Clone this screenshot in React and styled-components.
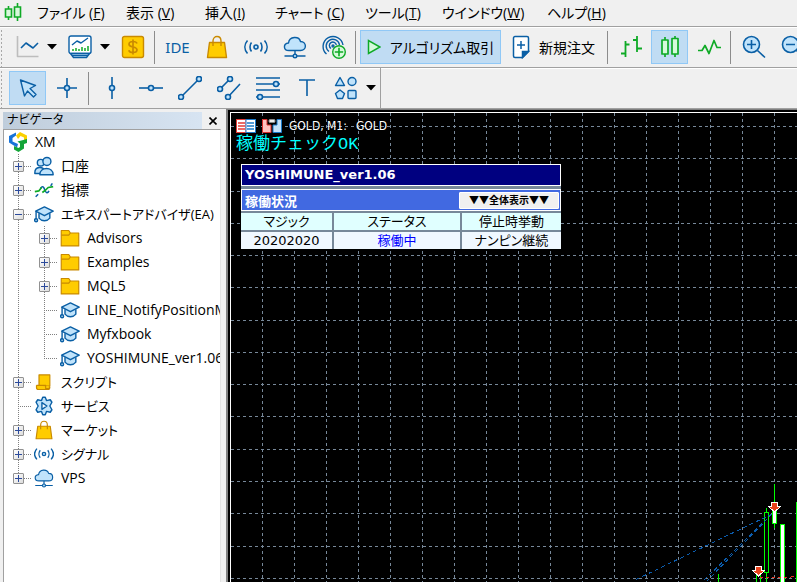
import React from 'react'
import styled, { createGlobalStyle, css } from 'styled-components'

const BLUE = '#0a5fa5'
const SKY = '#c0e3fb'
const GREEN = '#0faa26'
const MINT = '#d6fadb'
const GOLD = '#ffcc00'
const OCHRE = '#c98a00'

const GlobalStyle = createGlobalStyle`
  * { box-sizing: border-box; }
  body {
    margin: 0;
    overflow: hidden;
    background: #f0f0f0;
    color: #000;
    font-family: "Open Sans", "Noto Sans CJK JP", sans-serif;
    font-size: 14px;
  }
  button {
    font: inherit;
    color: inherit;
  }
`

const Window = styled.div`
  display: flex;
  flex-direction: column;
  height: 100vh;
`

const MenuBar = styled.nav`
  display: flex;
  flex: none;
  align-items: center;
  height: 27px;
  padding-left: 4px;
  border-bottom: 1px solid #a0a0a0;
  white-space: nowrap;
`

const MenuButton = styled.button`
  flex: none;
  width: ${(p) => p.$width}px;
  padding: 0;
  border: 0;
  background: none;
  line-height: 20px;
  text-align: left;
  white-space: nowrap;
  font-feature-settings: "palt";
`

const AppIcon = styled.span`
  display: flex;
  flex: none;
  width: 33px;
`

const ToolBar = styled.div`
  display: flex;
  flex: none;
  align-items: center;
  gap: 2px;
  height: 41px;
  padding-left: ${(p) => p.$indent}px;
  border-bottom: 1px solid #a0a0a0;
  background: radial-gradient(circle, #a8a8a8 1px, transparent 1px) 0 2px / 3px 4px repeat-y;
  box-shadow: inset 0 1px #fff;
  overflow: hidden;
`

const ToolButton = styled.button`
  display: flex;
  flex: none;
  align-items: center;
  justify-content: center;
  gap: 9px;
  height: 34px;
  width: ${(p) => p.$width || 37}px;
  padding: 0;
  border: 1px solid transparent;
  background: none;
  white-space: nowrap;
  font-feature-settings: "palt";
  ${(p) =>
    p.$active &&
    css`
      border-color: #90c8f6;
      background: #c0dcf3;
    `}
`

const DropDown = styled.div`
  display: flex;
  flex: none;
`

const CaretButton = styled.button`
  display: flex;
  align-items: center;
  justify-content: center;
  width: 14px;
  height: 34px;
  padding: 0;
  border: 0;
  background: none;
`

const Separator = styled.span`
  flex: none;
  width: 1px;
  height: 33px;
  margin: 0 2px 0 1px;
  background: #8c8c8c;
`

const BarEnd = styled.span`
  align-self: stretch;
  width: 1px;
  background: #a0a0a0;
`

const IdeText = styled.span`
  color: ${BLUE};
  font-family: "Noto Sans", sans-serif;
  font-size: 15px;
`

const Body = styled.div`
  display: flex;
  flex: 1;
  min-height: 0;
`

const Navigator = styled.aside`
  display: flex;
  flex: none;
  flex-direction: column;
  width: 226px;
  padding: 3px 5px 0 3px;
`

const NavHead = styled.header`
  display: flex;
  flex: none;
  align-items: stretch;
  height: 17px;
`

const NavTitle = styled.h2`
  flex: 1;
  margin: 0;
  padding-left: 4px;
  background: linear-gradient(to right, #bfcddb, #d7e4f2);
  font-size: 12px;
  font-weight: 400;
  line-height: 16px;
  font-feature-settings: "palt";
`

const CloseButton = styled.button`
  display: flex;
  align-items: center;
  justify-content: flex-end;
  width: 19px;
  padding: 0 4px 0 0;
  border: 0;
  background: none;
`

const Tree = styled.ul`
  flex: 1;
  margin: 0;
  padding: 0;
  overflow: hidden;
  border: 1px solid #a0a0a0;
  border-right-color: #e3e3e3;
  border-bottom: 0;
  background: #fff;
  list-style: none;
`

const TreeRow = styled.li`
  display: flex;
  align-items: center;
  height: 24px;
  white-space: nowrap;
`

const TreeIcon = styled.span`
  display: flex;
  flex: none;
  width: 20px;
  margin-right: 7px;
  margin-left: ${(p) => (p.$root ? 4 : 0)}px;
`

const TreeLabel = styled.span`
  font-size: ${(p) => (p.$kana ? 13 : 14)}px;
  line-height: 24px;
  font-feature-settings: "palt";
`

const vLine = 'repeating-linear-gradient(to bottom, #808080 0 1px, transparent 1px 2px)'
const hLine = 'repeating-linear-gradient(to right, #808080 0 1px, transparent 1px 2px)'

const Trunk = styled.span`
  flex: none;
  align-self: stretch;
  width: 26px;
  background: ${vLine} 14px 0 / 1px 100% no-repeat;
`

const Guide = styled.span`
  display: flex;
  flex: none;
  align-items: center;
  align-self: stretch;
  width: 30px;
  padding-left: 9px;
  background:
    ${vLine} 14px 0 / 1px ${(p) => (p.$last ? '50%' : '100%')} no-repeat,
    ${hLine} 14px 12px / 14px 1px no-repeat;
`

const Expander = styled.button`
  display: flex;
  align-items: center;
  justify-content: center;
  width: 11px;
  height: 11px;
  padding: 0;
  border: 1px solid #919191;
  border-radius: 1px;
  background: linear-gradient(135deg, #fff, #dcdcdc);
`

const Chart = styled.main`
  position: relative;
  flex: 1;
  min-width: 0;
  padding: 5px 0 0 5px;
  overflow: hidden;
  border-top: 1px solid #fff;
  border-left: 1px solid #fff;
  background: #000;
`

const ChartFrame = styled.div`
  display: flex;
  flex: 1;
  min-width: 0;
  padding: 2px 0 0 2px;
  border-top: 1px solid #808080;
  border-left: 2px solid #808080;
  background: #000;
`

const ChartCanvas = styled.svg`
  position: absolute;
  top: 0;
  left: 0;
  width: 100%;
  height: 100%;
`

const ChartContent = styled.div`
  position: relative;
`

const ChartHead = styled.div`
  display: flex;
  align-items: center;
  gap: 6px;
  height: 16px;
  color: #fff;
  font-family: "DejaVu Sans Condensed", "DejaVu Sans", sans-serif;
  font-size: 12px;
`

const SymbolName = styled.span`
  margin-left: ${(p) => (p.$first ? 1 : 3)}px;
`

const CheckText = styled.div`
  color: #00ffff;
  font-family: "Liberation Mono", "Noto Sans CJK JP", monospace;
  font-size: 17px;
  line-height: 22px;
`

const Panel = styled.section`
  width: 320px;
  margin: 8px 0 0 5px;
  background: #778899;
  font-family: "DejaVu Sans", "Noto Sans CJK JP", sans-serif;
  font-size: 13px;
`

const PanelTitle = styled.h1`
  margin: 0 0 3px;
  padding-left: 3px;
  border: 1px solid #fff;
  background: #000080;
  color: #fff;
  font-size: 13px;
  font-weight: 700;
  line-height: 20px;
`

const PanelBar = styled.div`
  display: flex;
  align-items: center;
  justify-content: space-between;
  height: 22px;
  padding: 0 1px 0 3px;
  border: 1px solid #fff;
  background: #4169e1;
  color: #fff;
  font-weight: 700;
`

const ShowAll = styled.button`
  width: 100px;
  height: 17px;
  padding: 0;
  border: 1px solid #fff;
  border-radius: 1px;
  background: #f0f0f0;
  color: #000;
  font-family: "Noto Sans CJK JP", sans-serif;
  font-size: 10px;
  line-height: 14px;
  white-space: nowrap;
`

const StatusTable = styled.table`
  width: 100%;
  border-collapse: separate;
  border-spacing: 0;
  table-layout: fixed;
`

const cell = css`
  height: 19px;
  padding: 0;
  border-top: 2px solid #778899;
  border-left: 2px solid #778899;
  font-weight: 400;
  line-height: 17px;
  text-align: center;
  font-feature-settings: "palt";
  &:first-child { border-left: 0; }
`

const HeadCell = styled.th`
  ${cell}
  width: ${(p) => p.$width}px;
  background: #e0ffff;
`

const DataCell = styled.td`
  ${cell}
  background: #f0f8ff;
  color: ${(p) => (p.$running ? '#0000ff' : '#000')};
`

const Icon = ({ size = 24, children, ...rest }) => (
  <svg
    width={size}
    height={size}
    viewBox="0 0 24 24"
    fill="none"
    stroke={BLUE}
    strokeWidth="1.4"
    strokeLinejoin="round"
    aria-hidden="true"
    {...rest}
  >
    {children}
  </svg>
)

const Caret = () => (
  <svg width="10" height="6" viewBox="0 0 10 6" aria-hidden="true">
    <path d="M0 0h10L5 5.5z" fill="#000" />
  </svg>
)

const LogoIcon = () => (
  <svg width="18" height="20" viewBox="0 0 18 20" fill="#d8f8dc" stroke={GREEN} strokeWidth="1.6" aria-hidden="true">
    <path d="M4.500 3v14M13.500 0v18" />
    <path d="M1.500 6h6v8h-6zM10.500 4h6v10h-6z" />
  </svg>
)

const LineChartIcon = () => (
  <Icon>
    <path d="M2.500 1v20.500h21" stroke="#bdbdbd" strokeWidth="1.600" />
    <path d="M6 13l5-5 7 5 5-5" strokeWidth="1.600" />
  </Icon>
)

const MonitorIcon = () => (
  <Icon>
    <rect x="1" y="1" width="22" height="17.500" rx="2" fill="#fff" />
    <path d="M4 10l5-4 4 2 7-5" />
    <path d="M5 16v-2M8 16v-3M11 16v-2M14 16v-4M17 16v-3M20 16v-5" stroke={GREEN} strokeWidth="1.500" />
    <path d="M2.500 18.500h19l-3 4h-13z" fill={SKY} />
    <path d="M4 20.500h16" />
  </Icon>
)

const DollarIcon = () => (
  <Icon stroke={OCHRE}>
    <rect x="1.500" y="1.500" width="21" height="21" rx="2" fill={GOLD} />
    <path d="M16 8.500c-.5-1.500-2-2-4-2s-4 .8-4 2.700c0 3.800 8 1.800 8 5.600 0 1.900-2 2.700-4 2.700s-3.800-.7-4.200-2.300M12 4.500v15" strokeWidth="1.700" />
  </Icon>
)

const BagIcon = ({ size }) => (
  <Icon size={size} stroke={OCHRE}>
    <path d="M4.500 7.500h15l2 15h-19z" fill={GOLD} />
    <path d="M8 11V6c0-6 8-6 8 0v5" />
  </Icon>
)

const SignalIcon = ({ size }) => (
  <Icon size={size} strokeWidth="1.600">
    <circle cx="12" cy="12" r="2" fill={SKY} />
    <path d="M7.500 7.500c-2 2.500-2 6.500 0 9M16.500 7.500c2 2.500 2 6.500 0 9M3.500 5.500c-3.500 4-3.500 9 0 13M20.500 5.500c3.500 4 3.500 9 0 13" />
  </Icon>
)

const CloudIcon = ({ size }) => (
  <Icon size={size}>
    <path d="M6 15.500c-6 0-6-7-.5-7.500C6.500 1 16 1 17.500 6.500c6.500 0 6.500 9 0 9z" fill={SKY} />
    <path d="M12 15.500v4M1.500 21h21" />
    <circle cx="12" cy="21" r="1.800" fill={SKY} />
  </Icon>
)

const RadarIcon = () => (
  <Icon>
    <path d="M4.500 19A10 10 0 1 1 21 10M7 16.500A6.700 6.700 0 1 1 17.500 10M9 13.500A3.500 3.500 0 1 1 14.300 10" />
    <circle cx="11" cy="11" r="1" />
    <circle cx="17" cy="17" r="6.300" fill={MINT} stroke={GREEN} />
    <path d="M17 12.800v8.400M12.800 17h8.400" stroke={GREEN} strokeWidth="1.600" />
  </Icon>
)

const PlayIcon = () => (
  <svg width="14" height="16" viewBox="0 0 14 16" fill={MINT} stroke={GREEN} strokeWidth="1.500" aria-hidden="true">
    <path d="M1.500 1.500v13L13 8z" />
  </svg>
)

const NewOrderIcon = () => (
  <svg width="18" height="24" viewBox="0 0 18 24" fill="none" stroke={BLUE} strokeWidth="1.500" aria-hidden="true">
    <path d="M3 1.500h12a1.500 1.500 0 0 1 1.500 1.500v13.500l-6 6H3A1.500 1.500 0 0 1 1.500 21V3A1.500 1.500 0 0 1 3 1.500z" fill="#fff" />
    <path d="M10.500 22.500v-6h6z" fill={BLUE} />
    <path d="M9 6v8M5 10h8" />
  </svg>
)

const BarsIcon = () => (
  <Icon stroke={GREEN} strokeWidth="1.800">
    <path d="M6.500 6v16M2 18.500h4.500M6.500 9.500h4M18 1v16M14 5h4M18 13.500h5" />
  </Icon>
)

const CandlesIcon = () => (
  <Icon stroke={GREEN} strokeWidth="1.700">
    <path d="M7 2v20M17 1v21" />
    <path d="M4 5h6v14H4zM14 3.500h6V19h-6z" fill={MINT} />
  </Icon>
)

const ZigzagIcon = () => (
  <Icon stroke={GREEN} strokeWidth="1.700">
    <path d="M1 15.500h4l3-5 4 8 5-13 3 7h4" />
  </Icon>
)

const ZoomIcon = ({ plus }) => (
  <Icon strokeWidth="1.600">
    <circle cx="9.500" cy="9.500" r="8" fill={SKY} />
    <path d="M15.500 15.500l7.500 7M5 9.500h9" />
    {plus && <path d="M9.500 5v9" />}
  </Icon>
)

const CursorIcon = () => (
  <Icon>
    <path d="M4.500 4l15 5.500-5.500 3 6 6-2.500 2.500-6-6-3 5z" fill={SKY} />
  </Icon>
)

const NodeIcon = ({ d, dots }) => (
  <Icon strokeWidth="1.600">
    <path d={d} />
    {dots.map(([cx, cy]) => (
      <circle key={`${cx}-${cy}`} cx={cx} cy={cy} r="2.500" fill={SKY} />
    ))}
  </Icon>
)

const TextIcon = () => (
  <Icon strokeWidth="1.600">
    <path d="M4 4h16M12 4v16" />
  </Icon>
)

const ShapesIcon = () => (
  <Icon fill={SKY}>
    <path d="M6 1.500l4.500 8h-9zM6 14l4.500 3.500-2 5h-5l-2-5z" />
    <circle cx="18" cy="5.500" r="4" />
    <rect x="14" y="14.500" width="8" height="8" rx="1" />
  </Icon>
)

const XmIcon = () => (
  <svg width="20" height="20" viewBox="0 0 20 20" aria-hidden="true">
    <path d="M1 4l7-3.500v3L4.500 6v3.500L10 12l-1 3.500-8-5z" fill="#1873d8" />
    <path d="M8 3.500L12 0l7 3.500v4.500l-3 1.500V5.500L12.500 4 10 7z" fill="#fbd000" />
    <path d="M9.500 9.500L19 7v4l-3 1v4.500L10.500 20 6 17.500V14l4.500 2 1.500-1v-3.500z" fill="#13a538" />
  </svg>
)

const PeopleIcon = () => (
  <Icon size={20} fill={SKY} strokeWidth="1.700">
    <circle cx="8" cy="8" r="4" />
    <path d="M1 20c0-8 10-8 12-2v3H1z" />
    <circle cx="15.500" cy="6.500" r="4.800" />
    <path d="M7 22.500c0-10 16-10 16 0z" />
  </Icon>
)

const IndicatorIcon = () => (
  <Icon size={20} strokeWidth="1.800">
    <path d="M2 20l3-3M8 10c2-4 4-1 5 2s3 5 5 1M20 7l2-3" />
    <path d="M1 14l5-1 3-4M10 15l4-3 3-3 6-1" stroke={GREEN} strokeWidth="2" />
  </Icon>
)

const CapIcon = () => (
  <Icon size={20} strokeWidth="1.700">
    <path d="M6 11v6c3 4 10 4 13 0v-6" fill={SKY} />
    <path d="M12.500 3.500L23 8.500l-10.500 5.500L2 8.500z" fill={SKY} />
    <path d="M2.500 9v9" />
    <circle cx="2.500" cy="19.500" r="1.800" fill={SKY} />
  </Icon>
)

const FolderIcon = () => (
  <Icon size={20} stroke={OCHRE} fill={GOLD}>
    <path d="M1.500 3h9l2 3h10v15.500h-21z" />
    <path d="M1.500 8.500h9l2-2.500" />
  </Icon>
)

const ScriptIcon = () => (
  <Icon size={20} stroke={OCHRE} fill={GOLD}>
    <path d="M6 3.500h13V17H6z" />
    <path d="M3 16h11v4h4.500v-3M3 16v2.500c0 1.500 1 2.500 2.500 2.500H17c1.500 0 2-1 2-3" />
  </Icon>
)

const ServiceIcon = () => (
  <Icon size={20} strokeWidth="1.700">
    <path
      d="M10.500 1.500h3l1.500 4 4.500-1 2 3-2.500 4.500 2.500 4.500-2 3-4.500-1-1.500 4h-3l-1.500-4-4.500 1-2-3L5 12 2.500 7.500l2-3 4.500 1z"
      fill={SKY}
    />
    <path d="M9.500 8v8l6-4z" fill="#fff" />
  </Icon>
)

const menus = [
  { label: 'ファイル (', key: 'F', width: 89 },
  { label: '表示 (', key: 'V', width: 79 },
  { label: '挿入(', key: 'I', width: 70 },
  { label: 'チャート (', key: 'C', width: 90 },
  { label: 'ツール(', key: 'T', width: 77 },
  { label: 'ウインドウ(', key: 'W', width: 105 },
  { label: 'ヘルプ(', key: 'H', width: 80 },
]

const lineTools = [
  { name: '垂直線', d: 'M12 1v22', dots: [[12, 12]] },
  { name: '水平線', d: 'M0 12h24', dots: [[12, 12]] },
  { name: 'トレンドライン', d: 'M3 21L21 3', dots: [[3, 21], [21, 3]] },
  { name: 'チャネル', d: 'M3 13L13 3M11 21L23 8', dots: [[3, 13], [13, 3], [11, 21]] },
  { name: 'フィボナッチ', d: 'M0 2h24M0 8h24M0 14h24M0 21h24', dots: [[20, 8], [4, 21]] },
]

const tree = [
  { label: '口座', icon: <PeopleIcon />, box: '+' },
  { label: '指標', icon: <IndicatorIcon />, box: '+' },
  { label: 'エキスパートアドバイザ(EA)', icon: <CapIcon />, box: '-' },
  { label: 'Advisors', icon: <FolderIcon />, box: '+', child: true },
  { label: 'Examples', icon: <FolderIcon />, box: '+', child: true },
  { label: 'MQL5', icon: <FolderIcon />, box: '+', child: true },
  { label: 'LINE_NotifyPositionM', icon: <CapIcon />, child: true },
  { label: 'Myfxbook', icon: <CapIcon />, child: true },
  { label: 'YOSHIMUNE_ver1.06', icon: <CapIcon />, child: true, last: true },
  { label: 'スクリプト', icon: <ScriptIcon />, box: '+' },
  { label: 'サービス', icon: <ServiceIcon /> },
  { label: 'マーケット', icon: <BagIcon size={20} />, box: '+' },
  { label: 'シグナル', icon: <SignalIcon size={20} />, box: '+' },
  { label: 'VPS', icon: <CloudIcon size={20} />, box: '+', last: true },
]

const columns = Array.from({ length: 80 }, (_, i) => 31 + i * 32)
const rows = Array.from({ length: 50 }, (_, i) => Math.round(13 + i * 32.27))

const SellArrow = ({ x, y }) => (
  <path
    d={`M${x - 3} ${y - 5}h6v4h3.500L${x} ${y + 5}l-6.500 -6H${x - 3}z`}
    fill="#e8421c"
    stroke="#fff"
    strokeWidth="1"
  />
)

const PriceChart = () => (
  <ChartCanvas aria-hidden="true" shapeRendering="crispEdges">
    <g stroke="#778899" strokeDasharray="3 3">
      {columns.map((x) => (
        <line key={x} x1={x + 0.5} x2={x + 0.5} y1="0" y2="100%" />
      ))}
      {rows.map((y) => (
        <line key={y} x1="0" x2="100%" y1={y + 0.5} y2={y + 0.5} />
      ))}
    </g>
    <g stroke="#00ff00" fill="#000">
      <path d="M487.500 461v60M535.500 395v74M543.500 371v44M525.500 461v60M529.500 461v60" />
      <path d="M565.500 389v200" strokeWidth="2" />
      <rect x="533.500" y="399.500" width="4" height="60" />
      <rect x="541.500" y="394.500" width="4" height="16" fill="#fff" />
      <rect x="549.500" y="411.500" width="4" height="200" fill="#fff" />
    </g>
    <path d="M541 401L402 468M541 401L472 468M541 401L476 468" stroke="#0b5cad" strokeDasharray="4 3" fill="none" />
    <path d="M529 464.500h31M560 463.500h6" stroke="#e8321c" strokeDasharray="3 3" />
    <SellArrow x={543.5} y={394} />
    <SellArrow x={527.5} y={458} />
  </ChartCanvas>
)

const HeadIcons = () => (
  <>
    <svg width="20" height="14" viewBox="0 0 20 14" aria-hidden="true">
      <rect x=".5" y=".5" width="9.500" height="13" fill="#fff" stroke="#e23b35" />
      <rect x="10" y=".5" width="9.500" height="13" fill="#fff" stroke="#1b79c8" />
      <path d="M2 4h7M2 7h7M2 10h7" stroke="#e23b35" strokeWidth="1.300" />
      <path d="M11 4h7M11 7h7M11 10h7" stroke="#1b79c8" strokeWidth="1.300" />
    </svg>
    <svg width="20" height="14" viewBox="0 0 20 14" aria-hidden="true">
      <path d="M.5 .5H5V6h4v7.500H.500z" fill="#ffc4c0" stroke="#d9302c" />
      <path d="M19.500.5H15V6h-4v7.500h8.500z" fill="#c4e2fa" stroke="#1b79c8" />
      <rect x="7" y=".5" width="6" height="3" rx="1" fill="#eee" stroke="#888" />
    </svg>
  </>
)

const Menu = () => (
  <MenuBar>
    <AppIcon>
      <LogoIcon />
    </AppIcon>
    {menus.map((menu) => (
      <MenuButton key={menu.key} $width={menu.width}>
        {menu.label}
        <u>{menu.key}</u>)
      </MenuButton>
    ))}
  </MenuBar>
)

const MainToolBar = () => (
  <ToolBar $indent={8}>
    <DropDown>
      <ToolButton aria-label="チャート"><LineChartIcon /></ToolButton>
      <CaretButton aria-label="チャートの一覧"><Caret /></CaretButton>
    </DropDown>
    <DropDown>
      <ToolButton aria-label="プロファイル"><MonitorIcon /></ToolButton>
      <CaretButton aria-label="プロファイルの一覧"><Caret /></CaretButton>
    </DropDown>
    <ToolButton aria-label="銘柄"><DollarIcon /></ToolButton>
    <Separator />
    <ToolButton><IdeText>IDE</IdeText></ToolButton>
    <ToolButton aria-label="マーケット"><BagIcon /></ToolButton>
    <ToolButton aria-label="シグナル"><SignalIcon /></ToolButton>
    <ToolButton aria-label="VPS"><CloudIcon /></ToolButton>
    <ToolButton aria-label="配信を追加"><RadarIcon /></ToolButton>
    <Separator />
    <ToolButton $active $width={141}>
      <PlayIcon />
      アルゴリズム取引
    </ToolButton>
    <ToolButton $width={101}>
      <NewOrderIcon />
      新規注文
    </ToolButton>
    <Separator />
    <ToolButton aria-label="バーチャート"><BarsIcon /></ToolButton>
    <ToolButton $active aria-label="ローソク足"><CandlesIcon /></ToolButton>
    <ToolButton aria-label="ラインチャート"><ZigzagIcon /></ToolButton>
    <Separator />
    <ToolButton aria-label="拡大"><ZoomIcon plus /></ToolButton>
    <ToolButton aria-label="縮小"><ZoomIcon /></ToolButton>
  </ToolBar>
)

const DrawToolBar = () => (
  <ToolBar $indent={9}>
    <ToolButton $active aria-label="カーソル"><CursorIcon /></ToolButton>
    <ToolButton aria-label="十字カーソル">
      <NodeIcon d="M12 2v20M2 12h20" dots={[[12, 12]]} />
    </ToolButton>
    <Separator />
    {lineTools.map((tool) => (
      <ToolButton key={tool.name} aria-label={tool.name}>
        <NodeIcon d={tool.d} dots={tool.dots} />
      </ToolButton>
    ))}
    <ToolButton aria-label="テキスト"><TextIcon /></ToolButton>
    <DropDown>
      <ToolButton aria-label="図形"><ShapesIcon /></ToolButton>
      <CaretButton aria-label="図形の一覧"><Caret /></CaretButton>
    </DropDown>
    <BarEnd />
  </ToolBar>
)

const NavigatorPanel = () => (
  <Navigator>
    <NavHead>
      <NavTitle>ナビゲータ</NavTitle>
      <CloseButton aria-label="閉じる">
        <svg width="8" height="8" viewBox="0 0 8 8" stroke="#000" strokeWidth="1.600" aria-hidden="true">
          <path d="M.5.5l7 7M7.500.5l-7 7" />
        </svg>
      </CloseButton>
    </NavHead>
    <Tree>
      <TreeRow>
        <TreeIcon $root><XmIcon /></TreeIcon>
        <TreeLabel>XM</TreeLabel>
      </TreeRow>
      {tree.map((item) => (
        <TreeRow key={item.label}>
          {item.child && <Trunk />}
          <Guide $last={item.last}>
            {item.box && (
              <Expander aria-label={item.label}>
                <svg width="7" height="7" viewBox="0 0 7 7" stroke="#2b4a9b" aria-hidden="true">
                  <path d={item.box === '+' ? 'M0 3.500h7M3.500 0v7' : 'M0 3.500h7'} />
                </svg>
              </Expander>
            )}
          </Guide>
          <TreeIcon>{item.icon}</TreeIcon>
          <TreeLabel $kana={/^[ァ-ヶ]/.test(item.label)}>{item.label}</TreeLabel>
        </TreeRow>
      ))}
    </Tree>
  </Navigator>
)

const StatusPanel = () => (
  <Panel>
    <PanelTitle>YOSHIMUNE_ver1.06</PanelTitle>
    <PanelBar>
      稼働状況
      <ShowAll>▼▼全体表示▼▼</ShowAll>
    </PanelBar>
    <StatusTable>
      <thead>
        <tr>
          <HeadCell $width={91}>マジック</HeadCell>
          <HeadCell $width={128}>ステータス</HeadCell>
          <HeadCell $width={101}>停止時挙動</HeadCell>
        </tr>
      </thead>
      <tbody>
        <tr>
          <DataCell>20202020</DataCell>
          <DataCell $running>稼働中</DataCell>
          <DataCell>ナンピン継続</DataCell>
        </tr>
      </tbody>
    </StatusTable>
  </Panel>
)

export default function App() {
  return (
    <Window>
      <GlobalStyle />
      <Menu />
      <MainToolBar />
      <DrawToolBar />
      <Body>
        <NavigatorPanel />
        <ChartFrame>
          <Chart>
            <PriceChart />
            <ChartContent>
              <ChartHead>
                <HeadIcons />
                <SymbolName $first>GOLD, M1:</SymbolName>
                <SymbolName>GOLD</SymbolName>
              </ChartHead>
              <CheckText>稼働チェックOK</CheckText>
              <StatusPanel />
            </ChartContent>
          </Chart>
        </ChartFrame>
      </Body>
    </Window>
  )
}
